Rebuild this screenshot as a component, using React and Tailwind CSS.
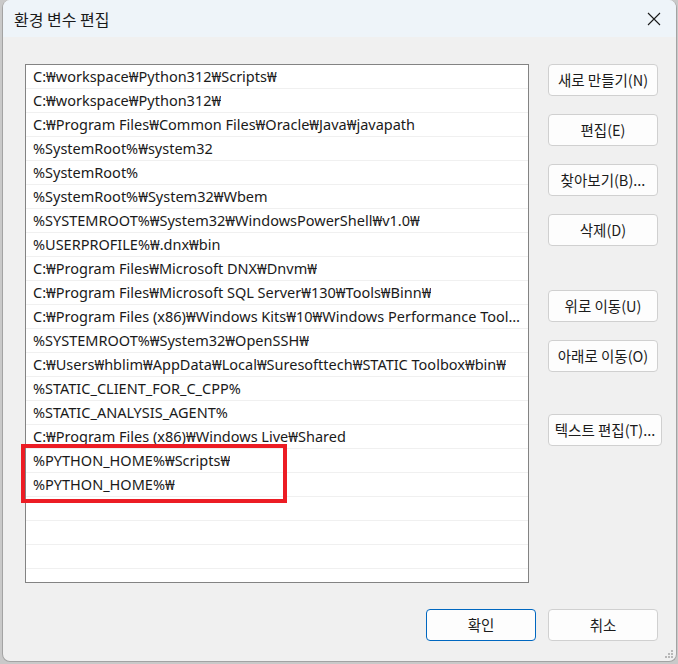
import React from 'react';

const paths = [
  'C:₩workspace₩Python312₩Scripts₩',
  'C:₩workspace₩Python312₩',
  'C:₩Program Files₩Common Files₩Oracle₩Java₩javapath',
  '%SystemRoot%₩system32',
  '%SystemRoot%',
  '%SystemRoot%₩System32₩Wbem',
  '%SYSTEMROOT%₩System32₩WindowsPowerShell₩v1.0₩',
  '%USERPROFILE%₩.dnx₩bin',
  'C:₩Program Files₩Microsoft DNX₩Dnvm₩',
  'C:₩Program Files₩Microsoft SQL Server₩130₩Tools₩Binn₩',
  'C:₩Program Files (x86)₩Windows Kits₩10₩Windows Performance Toolkit₩',
  '%SYSTEMROOT%₩System32₩OpenSSH₩',
  'C:₩Users₩hblim₩AppData₩Local₩Suresofttech₩STATIC Toolbox₩bin₩',
  '%STATIC_CLIENT_FOR_C_CPP%',
  '%STATIC_ANALYSIS_AGENT%',
  'C:₩Program Files (x86)₩Windows Live₩Shared',
  '%PYTHON_HOME%₩Scripts₩',
  '%PYTHON_HOME%₩',
  '',
  '',
  '',
];

const font = { fontFamily: '"Noto Sans", "Noto Sans CJK KR", sans-serif' };
const kr = { fontFamily: '"Noto Sans CJK KR", sans-serif' };

function DlgButton({ children, className = 'w-[110px]', primary = false }) {
  return (
    <button
      className={
        'h-[32px] shrink-0 rounded-[4px] bg-[#fdfdfd] text-[14.5px] text-[#1b1b1b] flex items-center justify-center whitespace-nowrap ' +
        (primary ? 'border border-[#0067c0] ' : 'border border-[#d0d0d0] ') +
        className
      }
    >
      {children}
    </button>
  );
}

export default function App() {
  return (
    <div className="w-[678px] h-[664px] bg-[#c9c9c9] pl-[2px]" style={font}>
      <div className="w-[675px] h-[662px] rounded-[8px] border-r border-b border-l border-[#a3a3a3] overflow-hidden flex flex-col bg-[#f0f0f0]">
        {/* title bar */}
        <div className="h-[37px] shrink-0 bg-[#eef4f9] flex items-center justify-between pl-[11px] pr-[14px]">
          <span className="text-[16px] text-[#1a1a1a] leading-none" style={kr}>
            환경 변수 편집
          </span>
          <svg width="14" height="14" viewBox="0 0 14 14" className="mr-[1px] mt-[1px]">
            <path d="M1 1 L13 13 M13 1 L1 13" stroke="#1a1a1a" strokeWidth="1.1" />
          </svg>
        </div>

        {/* body */}
        <div className="flex-1 relative pt-[27px] pl-[22px] flex flex-col">
          <div className="flex">
            <div className="w-[504px] h-[519px] shrink-0 border border-[#838383] bg-white overflow-hidden">
              {paths.map((p, i) => (
                <div
                  key={i}
                  className="h-[24px] border-b border-[#f0f0f0] pl-[7px] pr-[4px] flex items-center text-[14.5px] text-[#1a1a1a] whitespace-nowrap overflow-hidden"
                >
                  <span className="truncate">{p}</span>
                </div>
              ))}
            </div>

            <div className="ml-[19px] flex flex-col" style={kr}>
              <DlgButton>새로 만들기(N)</DlgButton>
              <DlgButton className="w-[110px] mt-[18px]">편집(E)</DlgButton>
              <DlgButton className="w-[110px] mt-[18px]">찾아보기(B)...</DlgButton>
              <DlgButton className="w-[110px] mt-[18px]">삭제(D)</DlgButton>
              <DlgButton className="w-[110px] mt-[44px]">위로 이동(U)</DlgButton>
              <DlgButton className="w-[110px] mt-[18px]">아래로 이동(O)</DlgButton>
              <DlgButton className="w-[114px] mt-[42px]">텍스트 편집(T)...</DlgButton>
            </div>
          </div>

          <div className="mt-[26px] flex justify-end gap-[12px] pr-[18px]" style={kr}>
            <DlgButton primary>확인</DlgButton>
            <DlgButton>취소</DlgButton>
          </div>

          {/* red highlight annotation */}
          <div className="absolute left-[18px] top-[407px] w-[266px] h-[59px] border-[4px] border-[#ec1c24]" />

          {/* resize grip */}
          <svg width="9" height="9" viewBox="0 0 9 9" className="absolute right-[2px] bottom-[2px]">
            <rect x="6" y="0" width="2" height="2" fill="#b8b8b8" />
            <rect x="3" y="3" width="2" height="2" fill="#b8b8b8" />
            <rect x="6" y="3" width="2" height="2" fill="#b8b8b8" />
            <rect x="0" y="6" width="2" height="2" fill="#b8b8b8" />
            <rect x="3" y="6" width="2" height="2" fill="#b8b8b8" />
            <rect x="6" y="6" width="2" height="2" fill="#b8b8b8" />
          </svg>
        </div>
      </div>
    </div>
  );
}
